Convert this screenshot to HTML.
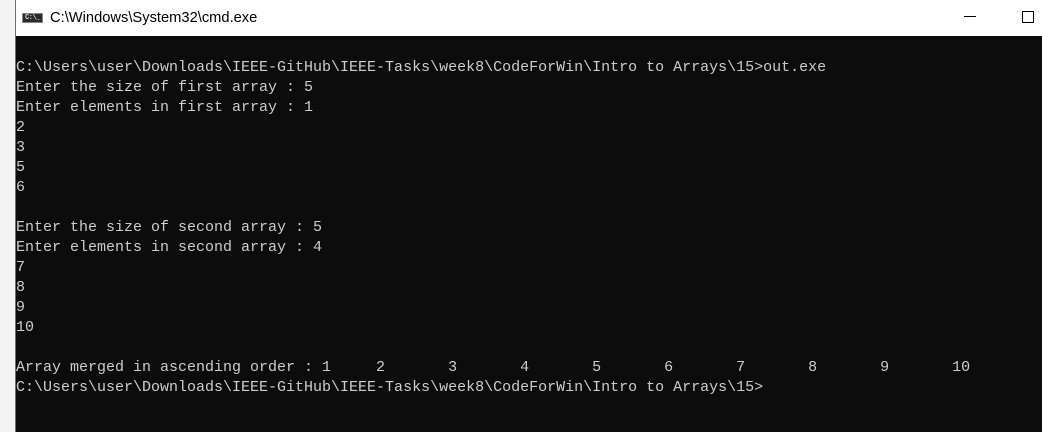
<!DOCTYPE html>
<html><head><meta charset="utf-8"><style>
html,body{margin:0;padding:0;width:1042px;height:432px;overflow:hidden;background:#0c0c0c;}
#strip{position:absolute;left:0;top:0;height:432px;background:#f3f3f3;border-right:1px solid #6f6f6f;box-sizing:border-box;width:16px;}
#title{position:absolute;left:16px;top:0;right:0;height:36px;background:#fff;}
#icon{position:absolute;left:6px;top:13px;width:21px;height:10px;background:#2a2a2a;border:1px solid #888;box-sizing:border-box;}
#icon span{position:absolute;left:2px;top:0px;font:bold 7px/8px "Liberation Mono",monospace;color:#ddd;letter-spacing:-0.5px;}
#tt{position:absolute;left:34px;top:10px;font:14.7px "Liberation Sans",sans-serif;color:#000;}
#min{position:absolute;left:964px;top:16px;width:12px;height:1px;background:#000;}
#max{position:absolute;left:1022px;top:11px;width:10px;height:10px;border:1px solid #000;}
pre{position:absolute;left:16px;top:58px;margin:0;font:15px/20px "Liberation Mono",monospace;color:#cccccc;white-space:pre;}
</style></head><body>
<div id="strip"></div>
<div id="title"><div id="icon"><span>C:\_</span></div><div id="tt">C:\Windows\System32\cmd.exe</div></div>
<div id="min"></div><div id="max"></div>
<pre>C:\Users\user\Downloads\IEEE-GitHub\IEEE-Tasks\week8\CodeForWin\Intro to Arrays\15>out.exe
Enter the size of first array : 5
Enter elements in first array : 1
2
3
5
6

Enter the size of second array : 5
Enter elements in second array : 4
7
8
9
10

Array merged in ascending order : 1     2       3       4       5       6       7       8       9       10
C:\Users\user\Downloads\IEEE-GitHub\IEEE-Tasks\week8\CodeForWin\Intro to Arrays\15></pre>
</body></html>
